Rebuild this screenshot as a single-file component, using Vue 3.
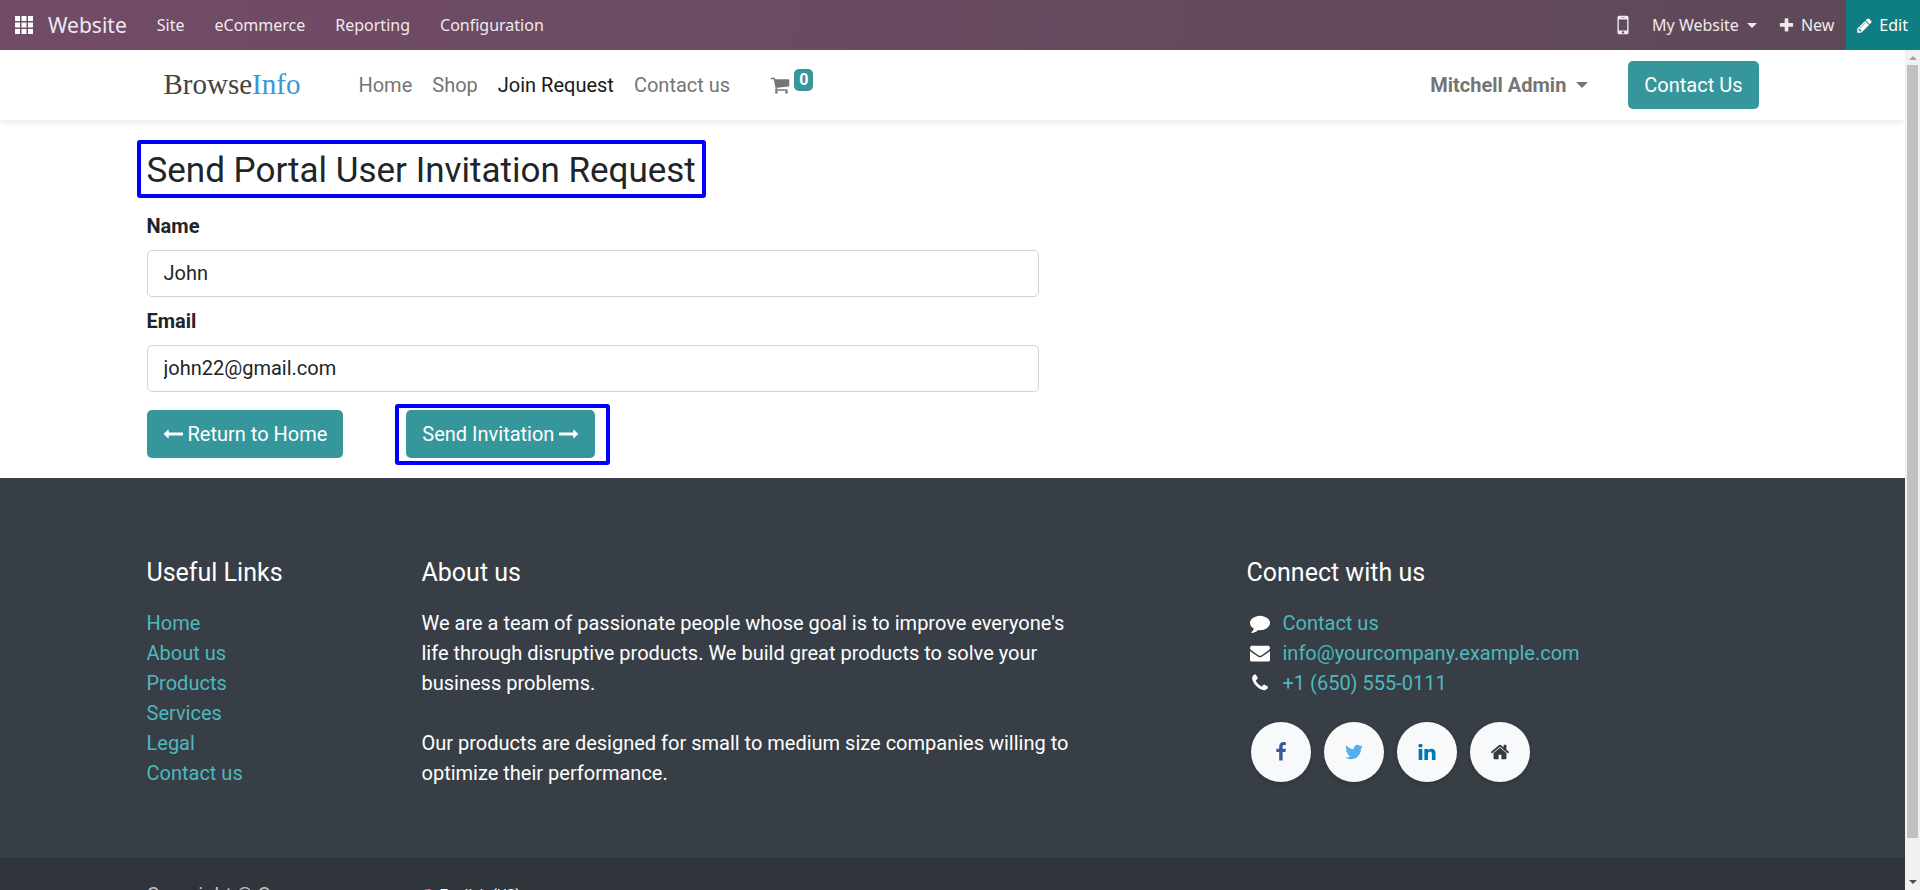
<script setup>
import { ref } from 'vue'

const icons = {
  mobile: 'M976 1408q0-33-23.5-56.5t-56.5-23.5-56.5 23.5-23.5 56.5 23.5 56.5 56.5 23.5 56.5-23.5 23.5-56.5zm208-160v-704q0-13-9.5-22.5t-22.5-9.5h-512q-13 0-22.5 9.5t-9.5 22.5v704q0 13 9.5 22.5t22.5 9.5h512q13 0 22.5-9.5t9.5-22.5zm-192-848q0-16-16-16h-160q-16 0-16 16t16 16h160q16 0 16-16zm288-16v1024q0 52-38 90t-90 38h-512q-52 0-90-38t-38-90v-1024q0-52 38-90t90-38h512q52 0 90 38t38 90z',
  plus: 'M1600 736v192q0 40-28 68t-68 28h-416v416q0 40-28 68t-68 28h-192q-40 0-68-28t-28-68v-416h-416q-40 0-68-28t-28-68v-192q0-40 28-68t68-28h416v-416q0-40 28-68t68-28h192q40 0 68 28t28 68v416h416q40 0 68 28t28 68z',
  pencil: 'M491 1536l91-91-235-235-91 91v107h128v128h107zm523-928q0-22-22-22-10 0-17 7l-542 542q-7 7-7 17 0 22 22 22 10 0 17-7l542-542q7-7 7-17zm-54-192l416 416-832 832h-416v-416zm683 96q0 53-37 90l-166 166-416-416 166-165q36-38 90-38 53 0 91 38l235 234q37 39 37 91z',
  cart: 'M704 1536q0 52-38 90t-90 38-90-38-38-90 38-90 90-38 90 38 38 90zm896 0q0 52-38 90t-90 38-90-38-38-90 38-90 90-38 90 38 38 90zm128-1088v512q0 24-16.5 42.5t-40.5 21.5l-1044 122q13 60 13 70 0 16-24 64h920q26 0 45 19t19 45-19 45-45 19h-1024q-26 0-45-19t-19-45q0-11 8-31.5t16-36 21.5-40 15.5-29.5l-177-823h-204q-26 0-45-19t-19-45 19-45 45-19h256q16 0 28.5 6.5t19.5 15.5 13 24.5 8 26 5.5 29.5 4.5 26h1201q26 0 45 19t19 45z',
  arrowLeft: 'M1792 800v192q0 14-9 23t-23 9h-1248v224q0 21-19 29t-35-5l-384-350q-10-10-10-23 0-14 10-24l384-354q16-14 35-6 19 9 19 29v224h1248q14 0 23 9t9 23z',
  arrowRight: 'M1728 893q0 14-10 24l-384 354q-16 14-35 6-19-9-19-29v-224h-1248q-14 0-23-9t-9-23v-192q0-14 9-23t23-9h1248v-224q0-21 19-29t35 5l384 350q10 10 10 23z',
  comment: 'M1792 896q0 174-120 321.5t-326 233-450 85.5q-70 0-145-8-198 175-460 242-49 14-114 22-17 2-30.5-9t-17.5-29v-1q-3-4-.5-12t2-10 4.5-9.5l6-9 7-8.5 8-9q7-8 31-34.5t34.5-38 31-39.5 32.5-51 27-59 26-76q-157-89-247.5-220t-90.5-281q0-130 71-248.5t191-204.5 286-136.5 348-50.5 348 50.5 286 136.5 191 204.5 71 248.5z',
  envelope: 'M1792 710v794q0 66-47 113t-113 47h-1472q-66 0-113-47t-47-113v-794q44 49 101 87 362 246 497 345 57 42 92.5 65.5t94.5 48 110 24.5h2q51 0 110-24.5t94.5-48 92.5-65.5q170-123 498-345 57-39 100-87zm0-294q0 79-49 151t-122 123q-376 261-468 325-10 7-42.5 31t-54 38.5-52 32.5-57.5 27-50 9h-2q-23 0-50-9t-57.5-27-52-32.5-54-38.5-42.5-31q-91-64-262-182.5t-205-142.5q-62-42-117-115.5t-55-136.5q0-78 41.5-130t118.5-52h1472q65 0 112.5 47t47.5 113z',
  phone: 'M1600 1240q0 27-10 70.5t-21 68.5q-21 50-122 106-94 51-186 51-27 0-53-3.5t-57.5-12.5-47-14.5-55.5-20.5-49-18q-98-35-175-83-127-79-264-216t-216-264q-48-77-83-175-3-9-18-49t-20.5-55.5-14.5-47-12.5-57.5-3.5-53q0-92 51-186 56-101 106-122 25-11 68.5-21t70.5-10q14 0 21 3 18 6 53 76 11 19 30 54t35 63.5 31 53.5q3 4 17.5 25t21.5 35.5 7 28.5q0 20-28.5 50t-62 55-62 53-28.5 46q0 9 5 22.5t8.5 20.5 14 24 11.5 19q76 137 174 235t235 174q2 1 19 11.5t24 14 20.5 8.5 22.5 5q18 0 46-28.5t53-62 55-62 50-28.5q14 0 28.5 7t35.5 21.5 25 17.5q25 15 53.5 31t63.5 35 54 30q70 35 76 53 3 7 3 21z',
  facebook: 'M1343 12v264h-157q-86 0-116 36t-30 108v189h293l-39 296h-254v759h-306v-759h-255v-296h255v-218q0-186 104-288.5t277-102.5q147 0 228 12z',
  twitter: 'M1684 408q-67 98-162 167 1 14 1 42 0 130-38 259.5t-115.5 248.5-184.5 210.5-258 146-323 54.5q-271 0-496-145 35 4 78 4 225 0 401-138-105-2-188-64.5t-114-159.5q33 5 61 5 43 0 85-11-112-23-185.5-111.5t-73.5-205.5v-4q68 38 146 41-66-44-105-115t-39-154q0-88 44-163 121 149 294.5 238.5t371.5 99.5q-8-38-8-74 0-134 94.5-228.5t228.5-94.5q140 0 236 102 109-21 205-78-37 115-142 178 93-10 186-50z',
  linkedin: 'M477 625v991h-330v-991h330zm21-306q1 73-50.5 122t-135.5 49h-2q-82 0-132-49t-50-122q0-74 51.5-122.5t134.5-48.5 133 48.5 51 122.5zm1166 729v568h-329v-530q0-105-40.5-164.5t-126.5-59.5q-63 0-105.5 34.5t-63.5 85.5q-11 30-11 81v553h-329q2-399 2-647t-1-296l-1-48h329v144h-2q20-32 41-56t56.5-52 87-43.5 114.5-15.5q171 0 275 113.5t104 332.5z',
  home: 'M1472 992v480q0 26-19 45t-45 19h-384v-384h-256v384h-384q-26 0-45-19t-19-45v-480q0-1 .5-3t.5-3l575-474 575 474q1 2 1 6zm223-69l-62 74q-8 9-21 11h-3q-13 0-21-7l-692-577-692 577q-12 8-24 7-13-2-21-11l-62-74q-8-10-7-23.5t11-21.5l719-599q32-26 76-26t76 26l244 204v-195q0-14 9-23t23-9h192q14 0 23 9t9 23v408l219 182q10 8 11 21.5t-7 23.5z'
}

const menu = ['Site', 'eCommerce', 'Reporting', 'Configuration']
const pages = ['Home', 'Shop', 'Join Request', 'Contact us']
const activePage = ref('Join Request')
const usefulLinks = ['Home', 'About us', 'Products', 'Services', 'Legal', 'Contact us']
const contacts = [
  { icon: 'comment', text: 'Contact us' },
  { icon: 'envelope', text: 'info@yourcompany.example.com' },
  { icon: 'phone', text: '+1 (650) 555-0111' }
]
const socials = ['facebook', 'twitter', 'linkedin', 'home']

const name = ref('John')
const email = ref('john22@gmail.com')
</script>

<template>
  <div class="app">
    <nav class="topbar" aria-label="Website builder">
      <button class="apps" type="button" aria-label="Apps">
        <svg width="18" height="18" viewBox="0 0 18 18">
          <path d="M0 0h5v5H0zM6.5 0h5v5h-5zM13 0h5v5h-5zM0 6.5h5v5H0zM6.5 6.5h5v5h-5zM13 6.5h5v5h-5zM0 13h5v5H0zM6.5 13h5v5h-5zM13 13h5v5h-5z" />
        </svg>
      </button>
      <a class="app-name" href="#">Website</a>
      <a v-for="item in menu" :key="item" class="menu-item" href="#">{{ item }}</a>
      <div class="systray">
        <button class="tray mobile" type="button" aria-label="Mobile preview">
          <svg width="26" height="26" viewBox="0 0 1792 1792"><path :d="icons.mobile" /></svg>
        </button>
        <button class="tray switcher" type="button">My Website<span class="caret small"></span></button>
        <button class="tray new" type="button">
          <svg width="17" height="17" viewBox="0 0 1792 1792"><path :d="icons.plus" /></svg>New
        </button>
        <button class="tray edit" type="button">
          <svg width="17" height="17" viewBox="0 0 1792 1792"><path :d="icons.pencil" /></svg>Edit
        </button>
      </div>
    </nav>

    <div class="viewport">
      <div class="page">
        <header class="site-header">
          <div class="container header-row">
            <a class="logo" href="#">Browse<span>Info</span></a>
            <nav class="site-nav" aria-label="Main">
              <a
                v-for="p in pages"
                :key="p"
                href="#"
                :class="{ active: p === activePage }"
                @click.prevent="activePage = p"
              >{{ p }}</a>
            </nav>
            <a class="cart" href="#" aria-label="Cart">
              <svg width="20" height="20" viewBox="0 0 1792 1792"><path :d="icons.cart" /></svg>
              <span class="badge">0</span>
            </a>
            <button class="user" type="button">Mitchell Admin<span class="caret"></span></button>
            <a class="btn" href="#">Contact Us</a>
          </div>
        </header>

        <main class="container main">
          <h2 class="title">Send Portal User Invitation Request</h2>
          <form class="form" @submit.prevent>
            <label for="name">Name</label>
            <input id="name" v-model="name" type="text" />
            <label for="email">Email</label>
            <input id="email" v-model="email" type="text" />
            <div class="actions">
              <a class="btn" href="#">
                <svg width="20" height="20" viewBox="0 0 1792 1792"><path :d="icons.arrowLeft" /></svg>
                Return to Home
              </a>
              <div class="highlight">
                <button class="btn" type="submit">
                  Send Invitation
                  <svg width="20" height="20" viewBox="0 0 1792 1792"><path :d="icons.arrowRight" /></svg>
                </button>
              </div>
            </div>
          </form>
        </main>

        <footer class="footer">
          <div class="footer-grid">
            <section class="links">
              <h5>Useful Links</h5>
              <ul>
                <li v-for="l in usefulLinks" :key="l"><a href="#">{{ l }}</a></li>
              </ul>
            </section>
            <section class="about">
              <h5>About us</h5>
              <p>
                We are a team of passionate people whose goal is to improve everyone's life through
                disruptive products. We build great products to solve your business problems.
              </p>
              <p>
                Our products are designed for small to medium size companies willing to optimize
                their performance.
              </p>
            </section>
            <section class="connect">
              <h5>Connect with us</h5>
              <ul>
                <li v-for="c in contacts" :key="c.text">
                  <svg width="20" height="20" viewBox="0 0 1792 1792"><path :d="icons[c.icon]" /></svg>
                  <a href="#">{{ c.text }}</a>
                </li>
              </ul>
              <div class="socials">
                <a v-for="s in socials" :key="s" href="#" :class="s" :aria-label="s">
                  <svg width="20" height="20" viewBox="0 0 1792 1792"><path :d="icons[s]" /></svg>
                </a>
              </div>
            </section>
          </div>
          <div class="copyright">
            <div class="footer-grid">
              <span class="links">Copyright © Company name</span>
              <button class="language" type="button">
                <svg width="12" height="12" viewBox="0 0 12 12">
                  <circle cx="6" cy="6" r="6" fill="#e8a0aa" />
                  <path d="M1 3a6 6 0 0 1 10 0zM0 5h12v2H0zM1 9h10a6 6 0 0 1-10 0z" fill="#d6707f" />
                  <path d="M6 0a6 6 0 0 0-6 6h6z" fill="#5c5f94" />
                </svg>
                English (US)
              </button>
            </div>
          </div>
        </footer>
      </div>

      <div class="scrollbar" aria-hidden="true">
        <span class="arrow up"></span>
        <span class="thumb"></span>
        <span class="arrow down"></span>
      </div>
    </div>
  </div>
</template>

<style>
body {
  margin: 0;
  overflow: hidden;
}
</style>

<style scoped>
* {
  box-sizing: border-box;
}
.app {
  display: flex;
  flex-direction: column;
  height: 100vh;
  font: 20px/30px Roboto, "Liberation Sans", sans-serif;
  color: #212529;
  background: #fff;
}
a {
  color: inherit;
  text-decoration: none;
}
button {
  border: 0;
  padding: 0;
  background: none;
  color: inherit;
  font: inherit;
  cursor: pointer;
}
svg {
  display: block;
  flex: none;
  fill: currentColor;
}
h2, h5, p, ul {
  margin: 0;
  padding: 0;
  font-weight: 400;
}
ul {
  list-style: none;
}
.caret {
  border: 6px solid transparent;
  border-top-color: currentColor;
  border-bottom: 0;
}
.caret.small {
  border-width: 5px;
  border-bottom: 0;
}

.topbar {
  display: flex;
  flex: none;
  align-items: center;
  height: 50px;
  padding-left: 15px;
  background: linear-gradient(100deg, #714b67 0%, #6b4a61 45%, #644a5d 65%, #5d4958 100%);
  color: #efe9ed;
  font: 16px/24px "Noto Sans", "Open Sans", sans-serif;
}
.apps {
  margin-right: 15px;
  color: #fff;
}
.app-name {
  margin-right: 15px;
  font-size: 21px;
}
.menu-item {
  padding: 0 15px;
}
.systray {
  display: flex;
  align-self: stretch;
  margin-left: auto;
}
.tray {
  display: flex;
  align-items: center;
  gap: 6px;
}
.mobile {
  margin-right: 16px;
}
.switcher {
  gap: 8px;
  margin-right: 21px;
}
.new {
  padding-right: 12px;
}
.edit {
  padding: 0 12px 0 10px;
  background: #0f7e83;
  color: #fff;
}

.viewport {
  display: flex;
  flex: 1;
  min-height: 0;
}
.page {
  flex: 1;
  min-width: 0;
  overflow: hidden;
}
.container {
  width: 100%;
  max-width: 1650px;
  margin: 0 auto;
  padding: 0 19px;
}
.site-header {
  position: relative;
  background: #fff;
  box-shadow: 0 2px 6px rgba(0, 0, 0, 0.1);
}
.header-row {
  display: flex;
  align-items: center;
  height: 70px;
}
.logo {
  margin: 0 48px 0 17px;
  padding-bottom: 2px;
  color: #444;
  font: 29px/40px "Liberation Serif", serif;
}
.logo span {
  color: #3498db;
}
.site-nav {
  display: flex;
  color: #757575;
}
.site-nav a {
  padding: 0 10px;
}
.site-nav .active {
  color: #191919;
}
.cart {
  display: flex;
  align-items: center;
  gap: 4px;
  margin-left: 30px;
  color: #757575;
}
.badge {
  margin-bottom: 10px;
  padding: 0 5px;
  border-radius: 5px;
  background: #35979c;
  color: #fff;
  font-size: 16px;
  font-weight: 700;
  line-height: 22px;
}
.user {
  display: flex;
  align-items: center;
  gap: 10px;
  margin-left: auto;
  margin-right: 40px;
  color: #757575;
  font-weight: 700;
}
.btn {
  display: flex;
  align-items: center;
  gap: 5px;
  padding: 9px 16px;
  border-radius: 5px;
  background: #35979c;
  color: #fff;
}

.main {
  padding-top: 20px;
  padding-bottom: 13px;
}
.title {
  width: fit-content;
  margin-left: -10px;
  padding: 6px 6px 2px;
  border: 4px solid #0000ff;
  border-radius: 3px;
  font-size: 35px;
  line-height: 42px;
}
.form {
  display: flex;
  flex-direction: column;
  width: 892px;
  max-width: 100%;
  margin-top: 13px;
}
.form label {
  margin-bottom: 9px;
  font-weight: 700;
}
.form input {
  width: 100%;
  height: 47px;
  margin-bottom: 9px;
  padding: 0 16px 2px;
  border: 1px solid #ced4da;
  border-radius: 5px;
  background: #fff;
  color: #212529;
  font: inherit;
}
.actions {
  display: flex;
  align-items: flex-start;
  gap: 52px;
  margin-top: 3px;
}
.actions > .btn {
  margin-top: 6px;
}
.highlight {
  padding: 2px 11px 3px 7px;
  border: 4px solid #0000ff;
  border-radius: 3px;
}

.footer {
  background: #383e45;
  color: #fff;
}
.footer-grid {
  display: grid;
  grid-template-columns: repeat(12, minmax(0, 1fr));
  max-width: 1650px;
  margin: 0 auto;
}
.footer-grid > * {
  padding: 0 19px;
}
.footer > .footer-grid {
  padding-top: 80px;
  padding-bottom: 70px;
}
.links {
  grid-column: 1 / 3;
}
.about {
  grid-column: 3 / 8;
}
.connect {
  grid-column: 9 / 12;
}
.footer h5 {
  margin-bottom: 20px;
  font-size: 25px;
}
.footer li a {
  color: #4cb9bf;
}
.about p + p {
  margin-top: 30px;
}
.connect li {
  display: flex;
  align-items: center;
  gap: 13px;
  padding-left: 3px;
}
.connect a {
  white-space: nowrap;
}
.socials {
  display: flex;
  gap: 13px;
  margin: 24px 0 0 4px;
}
.socials a {
  display: grid;
  place-items: center;
  width: 60px;
  height: 60px;
  border-radius: 50%;
  background: #f8f9fa;
  box-shadow: 0 2px 4px rgba(0, 0, 0, 0.15);
}
.socials .facebook {
  color: #3b5998;
}
.socials .twitter {
  color: #55acee;
}
.socials .linkedin {
  color: #0077b5;
}
.socials .home {
  color: #343a40;
}
.copyright {
  padding: 22px 0;
  background: #30343b;
}
.copyright .links {
  color: #c1c2c4;
  white-space: nowrap;
}
.language {
  display: flex;
  grid-column: 3 / 8;
  align-items: center;
  gap: 6px;
  font-size: 15px;
}

.scrollbar {
  display: flex;
  flex: none;
  flex-direction: column;
  align-items: center;
  width: 15px;
  background: #f1f1f1;
}
.thumb {
  width: 11px;
  height: 92%;
  background: #c1c1c1;
}
.arrow {
  margin: 6px 0 5px;
  border: 4px solid transparent;
}
.arrow.up {
  border-top: 0;
  border-bottom-color: #a3a3a3;
}
.arrow.down {
  margin: auto 0 6px;
  border-top-color: #505050;
  border-bottom: 0;
}
</style>
